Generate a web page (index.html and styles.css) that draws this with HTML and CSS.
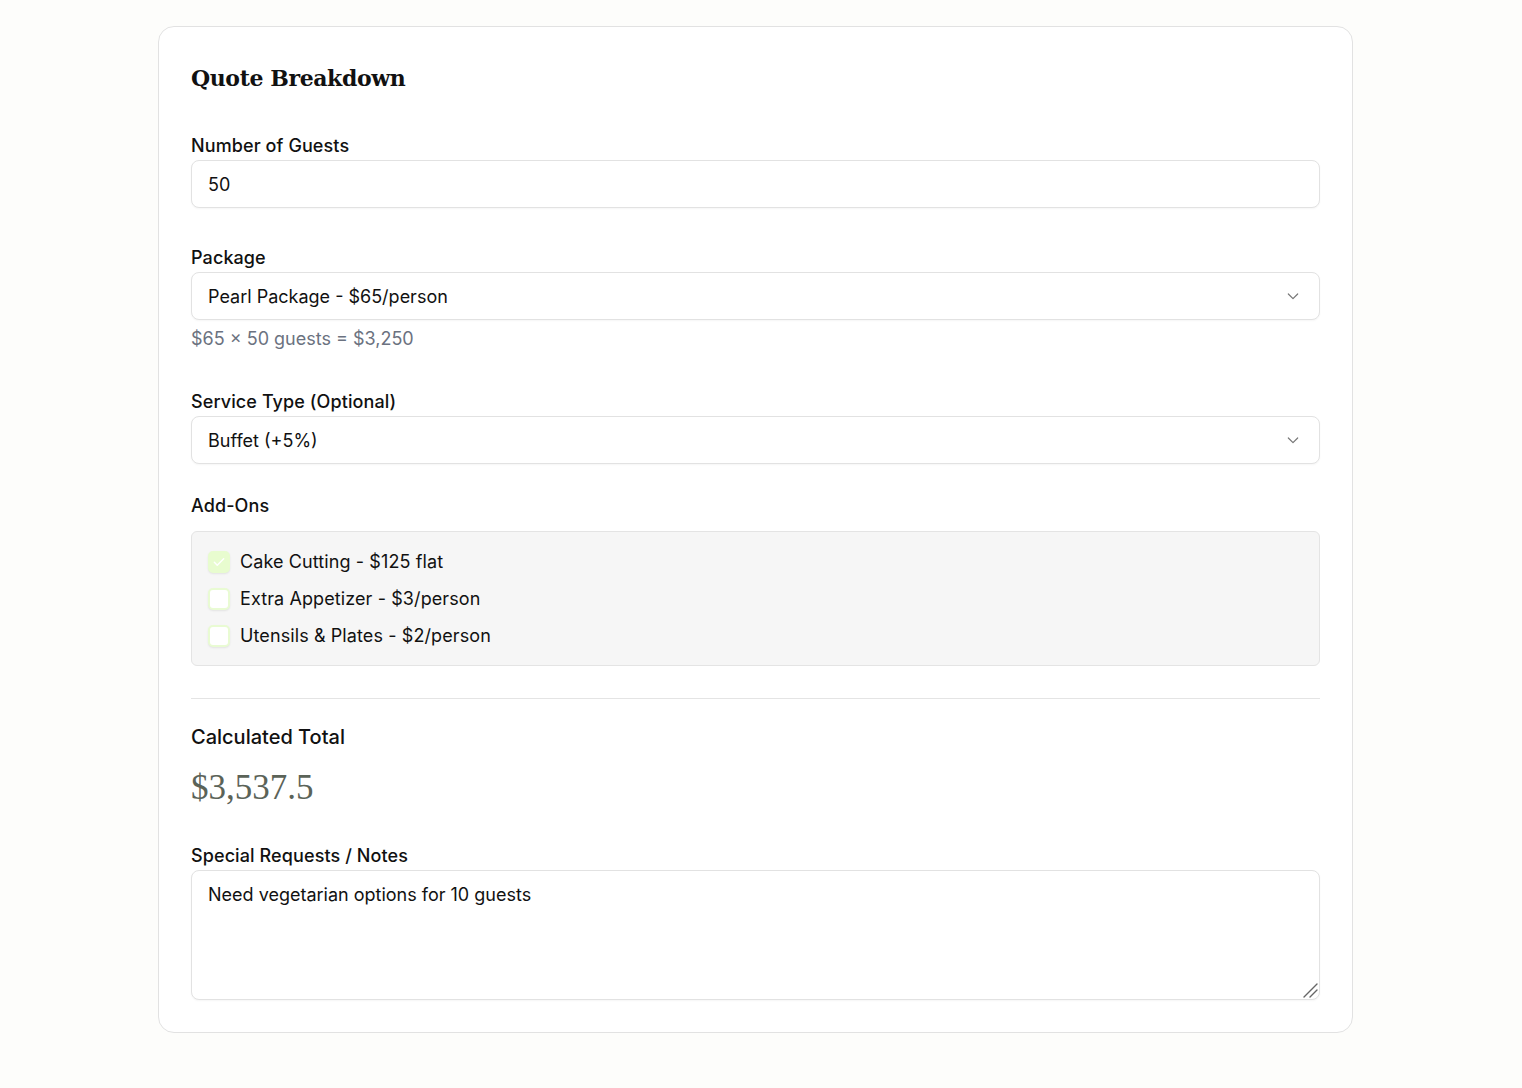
FILE: index.html
```html
<!DOCTYPE html>
<html lang="en">
<head>
  <meta charset="UTF-8">
  <title>Quote Breakdown</title>
  <meta name="viewport" content="width=device-width, initial-scale=1.0">
  <link rel="stylesheet" href="styles.css">
</head>
<body>
  <div class="card">
    <h2>Quote Breakdown</h2>

    <div class="field">
      <label for="guests">Number of Guests</label>
      <input type="text" id="guests" value="50">
    </div>

    <div class="field field-hint">
      <label for="package">Package</label>
      <div class="select-wrap">
        <select id="package">
          <option>Pearl Package - $65/person</option>
        </select>
        <svg class="chevron" width="16" height="16" viewBox="0 0 24 24" fill="none" stroke="currentColor" stroke-width="1.8" stroke-linecap="round" stroke-linejoin="round"><path d="M5 9l7 7 7-7"/></svg>
      </div>
      <p class="hint">$65 × 50 guests = $3,250</p>
    </div>

    <div class="field field-service">
      <label for="service">Service Type (Optional)</label>
      <div class="select-wrap">
        <select id="service">
          <option>Buffet (+5%)</option>
        </select>
        <svg class="chevron" width="16" height="16" viewBox="0 0 24 24" fill="none" stroke="currentColor" stroke-width="1.8" stroke-linecap="round" stroke-linejoin="round"><path d="M5 9l7 7 7-7"/></svg>
      </div>
    </div>

    <div class="addons">
      <div class="addons-title">Add-Ons</div>
      <div class="addons-box">
        <label class="check">
          <span class="box checked">
            <svg width="14" height="14" viewBox="0 0 24 24" fill="none" stroke="#fff" stroke-width="2.5" stroke-linecap="round" stroke-linejoin="round"><path d="M4 12.5l5 5L20 6.5"/></svg>
          </span>
          Cake Cutting - $125 flat
        </label>
        <label class="check">
          <span class="box"></span>
          Extra Appetizer - $3/person
        </label>
        <label class="check">
          <span class="box"></span>
          Utensils &amp; Plates - $2/person
        </label>
      </div>
    </div>

    <hr>

    <div class="total">
      <h3>Calculated Total</h3>
      <div class="amount">$3,537.5</div>
    </div>

    <div class="field last">
      <label for="notes">Special Requests / Notes</label>
      <div class="notes-wrap">
        <textarea id="notes">Need vegetarian options for 10 guests</textarea>
        <!-- resize grip -->
        <svg class="grip" width="16" height="16" viewBox="0 0 16 16" stroke="#666" stroke-width="1.4" stroke-linecap="round"><path d="M2 15L15 2M8 15l7-7"/></svg>
      </div>
    </div>
  </div>
</body>
</html>
```

FILE: styles.css
```css
* {
  box-sizing: border-box;
}

body {
  font-family: Inter, 'Noto Sans', sans-serif;
  background: #fdfdfb;
  color: #111;
  margin: 0;
  padding: 26px 0 40px;
}

.card {
  width: 1195px;
  margin: 0 0 0 158px;
  background: #fff;
  border: 1px solid #e2e2e2;
  border-radius: 16px;
  padding: 32px;
}

h2 {
  font-family: 'DejaVu Serif', Georgia, serif;
  font-size: 22px;
  font-weight: bold;
  line-height: 36px;
  margin: 1px 0 38px;
  letter-spacing: -0.4px;
}

.field {
  margin-bottom: 38px;
}

.field-hint {
  margin-bottom: 39px;
}

.field-service {
  margin-bottom: 30px;
}

.field.last {
  margin-bottom: 0;
}

label,
.addons-title {
  display: block;
  font-size: 18px;
  font-weight: 500;
  line-height: 24px;
  margin-bottom: 2px;
  letter-spacing: 0.1px;
}

input[type="text"],
select,
textarea {
  display: block;
  width: 100%;
  height: 48px;
  padding: 0 16px;
  font-family: inherit;
  font-size: 18px;
  color: #111;
  background: #fff;
  border: 1px solid #e2e2e2;
  border-radius: 8px;
  box-shadow: 0 1px 2px rgba(0,0,0,0.04);
  outline: none;
}

select {
  appearance: none;
  -webkit-appearance: none;
}

.select-wrap,
.notes-wrap {
  position: relative;
}

.chevron {
  position: absolute;
  right: 19px;
  top: 16px;
  color: #777;
  pointer-events: none;
}

.hint {
  margin: 7px 0 0;
  font-size: 18px;
  line-height: 24px;
  color: #6b7280;
}

textarea {
  height: 130px;
  padding: 12px 16px;
  line-height: 24px;
  resize: none;
}

.grip {
  position: absolute;
  right: 2px;
  bottom: 2px;
  pointer-events: none;
}

.addons-title {
  margin-bottom: 13px;
}

.addons-box {
  display: flex;
  flex-direction: column;
  gap: 9px;
  padding: 16px 16px 15px;
  background: #f6f6f6;
  border: 1px solid #e4e4e4;
  border-radius: 6px;
}

.check {
  display: flex;
  align-items: center;
  gap: 10px;
  margin: 0;
  font-weight: 400;
  line-height: 28px;
}

.box {
  width: 22px;
  height: 22px;
  flex-shrink: 0;
  display: flex;
  align-items: center;
  justify-content: center;
  background: #fff;
  border: 2px solid #e9fbd3;
  border-radius: 5px;
  box-shadow: 0 1px 2px rgba(0,0,0,0.08);
}

.box.checked {
  background: #e8fccf;
  border-color: #e8fccf;
}

hr {
  border: none;
  border-top: 1px solid #e4e4e4;
  margin: 32px 0 23px;
}

.total h3 {
  font-size: 20px;
  font-weight: 500;
  line-height: 30px;
  margin: 0 0 14px;
}

.amount {
  font-family: Georgia, 'Liberation Serif', serif;
  font-size: 35px;
  line-height: 44px;
  color: #5b6358;
  margin-bottom: 34px;
}
```
